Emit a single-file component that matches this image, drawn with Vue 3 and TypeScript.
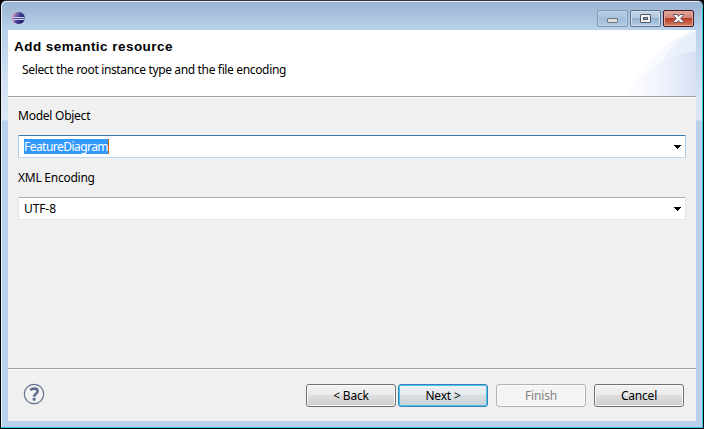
<script setup lang="ts">
import { ref } from 'vue'

interface Field {
  label: string
  value: string
  active: boolean
}
interface Action {
  label: string
  kind: string
}

const fields = ref<Field[]>([
  { label: 'Model Object', value: 'FeatureDiagram', active: true },
  { label: 'XML Encoding', value: 'UTF-8', active: false },
])
const actions: Action[] = [
  { label: '< Back', kind: 'back' },
  { label: 'Next >', kind: 'primary' },
  { label: 'Finish', kind: 'disabled' },
  { label: 'Cancel', kind: 'cancel' },
]
</script>

<template>
  <div class="window">
    <div class="titlebar">
      <svg class="logo" width="15" height="14" viewBox="0 0 15 14">
        <defs>
          <linearGradient id="ball" x1="0" x2="1" y1="0" y2="0.4">
            <stop offset="0" stop-color="#d893b8" />
            <stop offset="0.3" stop-color="#8673b0" />
            <stop offset="0.6" stop-color="#403a8c" />
            <stop offset="1" stop-color="#241f68" />
          </linearGradient>
        </defs>
        <ellipse cx="6.5" cy="7" rx="6" ry="6" fill="#d99abd" />
        <circle cx="7.8" cy="7" r="6.1" fill="url(#ball)" />
        <path d="M2 6.5H13.6M1.8 8.5H13.7" stroke="#cfd5f2" stroke-width="1" />
        <path d="M2 7.5H14" stroke="#4c479b" stroke-width="1" />
      </svg>
      <div class="controls">
        <span class="control minimize">
          <svg width="29" height="15" viewBox="0 0 29 15"><rect x="9.5" y="7.5" width="10" height="4" rx="0.5" fill="#dedede" stroke="#6c7580" /></svg>
        </span>
        <span class="control">
          <svg width="29" height="15" viewBox="0 0 29 15"><rect x="9.5" y="3.5" width="10" height="8" rx="0.5" fill="#f5f5f5" stroke="#505868" /><rect x="12.5" y="6.5" width="4" height="2" fill="#90abc8" stroke="#505868" /></svg>
        </span>
        <span class="control close">
          <svg width="29" height="15" viewBox="0 0 29 15"><path d="M9.5 3.5H13L14.5 5.3L16 3.5H19.5V4.5L16.8 7.4L19.5 10.5V11.5H16L14.5 9.7L13 11.5H9.5V10.5L12.2 7.4L9.5 4.5Z" fill="#f5f5f5" stroke="#655968" /></svg>
        </span>
      </div>
    </div>

    <div class="dialog">
      <header class="header">
        <div class="headings">
          <h1>Add semantic resource</h1>
          <p>Select the root instance type and the file encoding</p>
        </div>
        <svg class="swoosh" width="75" height="66" viewBox="0 0 75 66">
          <defs>
            <linearGradient id="outer" x1="0" x2="1" y1="0" y2="0">
              <stop offset="0" stop-color="#ffffff" />
              <stop offset="0.5" stop-color="#f8fafe" />
              <stop offset="1" stop-color="#edf2fb" />
            </linearGradient>
            <linearGradient id="inner" x1="0" x2="1" y1="0" y2="0">
              <stop offset="0" stop-color="#ffffff" />
              <stop offset="0.5" stop-color="#eff3fc" />
              <stop offset="1" stop-color="#dbe1f5" />
            </linearGradient>
          </defs>
          <path d="M4 66C16 42 42 10 75 0V66Z" fill="url(#outer)" />
          <path d="M36 42C42 27 54 9 75 1V66H36Z" fill="#e3eaf8" opacity="0.45" />
          <path d="M4 66C17 45 44 24 75 21V66Z" fill="url(#inner)" />
        </svg>
      </header>

      <main class="form">
        <div v-for="field in fields" :key="field.label" class="field">
          <label>{{ field.label }}</label>
          <div class="combo" :class="{ active: field.active }">
            <span class="value">{{ field.value }}</span>
            <svg width="7" height="4" viewBox="0 0 7 4" shape-rendering="crispEdges"><path d="M0 0H7V1H6V2H5V3H4V4H3V3H2V2H1V1H0Z" /></svg>
          </div>
        </div>
      </main>

      <footer class="footer">
        <svg class="help" width="22" height="22" viewBox="0 0 22 22">
          <circle cx="11" cy="11" r="9.7" fill="#f3f3f4" stroke="#61718e" stroke-width="1.2" />
          <path d="M7.3 7.2C8.6 5.9 10 5.5 11.5 5.6C13.6 5.7 14.6 6.7 14.6 8.2C14.6 10.7 11.1 10.8 11.1 13.7" fill="none" stroke="#5d6d8c" stroke-width="2.6" />
          <rect x="9.6" y="14.8" width="3" height="3" rx="1" fill="#5d6d8c" />
        </svg>
        <div class="actions">
          <button v-for="action in actions" :key="action.label" :class="action.kind" :disabled="action.kind === 'disabled'">
            <span>{{ action.label }}</span>
          </button>
        </div>
      </footer>
    </div>
  </div>
</template>

<style>
body {
  background: #000;
  overflow: hidden;
}
</style>

<style scoped>
* {
  box-sizing: border-box;
}
.window {
  width: 704px;
  height: 429px;
  padding: 0 7px 6px;
  border: 1px solid #000;
  border-top-color: #303038;
  border-radius: 6px 6px 0 0;
  background: linear-gradient(#99b4d1 0, #b9d1ea 29px, #d5e3f3 90px, #dce8f5 119px, #b9d1ea 120px);
  box-shadow: inset -1px -1px #35c8ed, inset 1px 1px #e7f1fa;
  font: 12px/16px "Noto Sans", sans-serif;
  color: #000;
}
.titlebar {
  height: 29px;
  display: flex;
  justify-content: space-between;
  align-items: flex-start;
  padding: 9px 2px 0 3px;
}
.logo {
  margin-top: 1px;
}
.controls {
  display: flex;
  gap: 2px;
}
.control {
  width: 31px;
  height: 17px;
  border: 1px solid #5c7088;
  border-radius: 2px;
  background: linear-gradient(#c3d6ea 0, #b3c9e0 47%, #96b3d1 50%, #b5cde5 100%);
  box-shadow: inset 0 0 0 1px #d0e0f0;
}
.control svg {
  display: block;
}
.minimize {
  border-color: #7e98b4;
  background: linear-gradient(#b4cbe2 0, #aac3dd 47%, #9ebad6 50%, #b3cce5 100%);
  box-shadow: inset 0 0 0 1px #bdd2e7;
}
.close {
  border-color: #471922;
  background: linear-gradient(#dfa89d 0, #d18477 47%, #b83b24 50%, #d58063 100%);
  box-shadow: inset 0 0 0 1px #e3a69b;
}
.dialog {
  height: 391px;
  display: flex;
  flex-direction: column;
  background: #f0f0f0;
}
.header {
  height: 68px;
  display: flex;
  justify-content: space-between;
  background: #fff;
  border-bottom: 1px solid #fff;
  box-shadow: inset 0 -1px #a0a0a0;
}
.headings {
  padding: 9px 0 0 6px;
}
h1 {
  margin: 0;
  font: bold 13.5px/16px "Liberation Sans", sans-serif;
  letter-spacing: 0.46px;
}
p {
  margin: 7px 0 0 8px;
  letter-spacing: -0.35px;
}
.form {
  flex: 1;
  display: flex;
  flex-direction: column;
  gap: 13px;
  padding: 10px 10px 0;
}
.field {
  height: 49px;
}
label {
  display: block;
  height: 27px;
  letter-spacing: -0.25px;
}
.combo {
  height: 23px;
  display: flex;
  align-items: center;
  justify-content: space-between;
  padding: 0 4px 0 5px;
  background: #fff;
  border: 1px solid #e2e3ea;
  border-top-color: #abadb3;
  border-radius: 1px;
}
.combo.active {
  border-color: #a9cce9;
  border-top-color: #3d7bad;
  border-bottom-color: #b7d9ed;
}
.value {
  height: 15px;
  line-height: 15px;
  letter-spacing: -0.1px;
}
.active .value {
  background: #39f;
  color: #fff;
  letter-spacing: -0.54px;
  border-right: 1px solid #c66900;
}
.combo svg {
  margin-top: 1px;
}
.footer {
  height: 53px;
  display: flex;
  justify-content: space-between;
  border-top: 1px solid #a0a0a0;
  box-shadow: inset 0 1px #fff;
  padding: 15px 12px 0 15px;
}
.help {
  margin-top: -1px;
}
.actions {
  display: flex;
}
button {
  width: 90px;
  height: 23px;
  padding: 0;
  font: inherit;
  letter-spacing: -0.2px;
  color: #000;
  border: 1px solid #707070;
  border-radius: 3px;
  background: linear-gradient(#f2f2f2 0, #ebebeb 48%, #dddddd 50%, #cfcfcf 100%);
  box-shadow: inset 0 0 0 1px #fbfbfb;
}
.primary {
  margin-left: 2px;
  border-color: #3c7fb1;
  background: linear-gradient(#eff2f3 0, #e6eaec 48%, #d8dfe2 50%, #cad2d6 100%);
  box-shadow: inset 0 0 0 1px #42c8f3;
}
.disabled {
  margin-left: 8px;
  color: #838383;
  border-color: #adb2b5;
  background: #f4f4f4;
}
.cancel {
  margin-left: 8px;
}
</style>
